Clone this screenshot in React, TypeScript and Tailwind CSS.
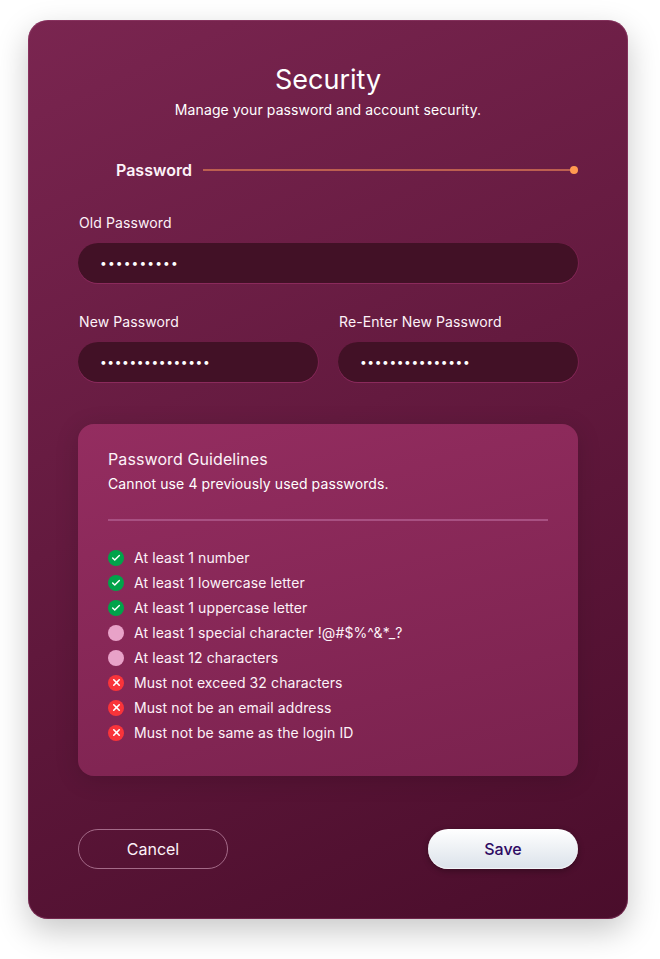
import { Check, X } from "lucide-react";

type RuleState = "pass" | "idle" | "fail";

const rules: { label: string; state: RuleState }[] = [
  { label: "At least 1 number", state: "pass" },
  { label: "At least 1 lowercase letter", state: "pass" },
  { label: "At least 1 uppercase letter", state: "pass" },
  { label: "At least 1 special character !@#$%^&*_?", state: "idle" },
  { label: "At least 12 characters", state: "idle" },
  { label: "Must not exceed 32 characters", state: "fail" },
  { label: "Must not be an email address", state: "fail" },
  { label: "Must not be same as the login ID", state: "fail" },
];

function RuleIcon({ state }: { state: RuleState }) {
  if (state === "pass") {
    return (
      <span className="flex h-4 w-4 shrink-0 items-center justify-center rounded-full bg-[#00a34a] text-white">
        <Check size={10} strokeWidth={3.5} />
      </span>
    );
  }
  if (state === "fail") {
    return (
      <span className="flex h-4 w-4 shrink-0 items-center justify-center rounded-full bg-[#f9343a] text-white">
        <X size={11} strokeWidth={3.5} />
      </span>
    );
  }
  return <span className="h-4 w-4 shrink-0 rounded-full bg-[#e8a2c8]" />;
}

function PasswordField({
  label,
  dots,
  dotsClassName,
}: {
  label: string;
  dots: number;
  dotsClassName: string;
}) {
  return (
    <div className="flex min-w-0 flex-1 flex-col">
      <label className="pl-px text-sm leading-5 tracking-[0.1px] text-[#fdf2f8]">{label}</label>
      <div
        className={`mt-[10px] flex h-10 items-center rounded-full bg-[#421126] pl-[22px] text-xs leading-none text-white shadow-[0_1px_0_#8b2a5c,1px_0_0_rgba(139,42,92,0.5)] ${dotsClassName}`}
      >
        {"•".repeat(dots)}
      </div>
    </div>
  );
}

export default function App() {
  return (
    <div className="min-h-[959px] bg-white pt-5 pl-7 font-['Inter',sans-serif]">
      <div className="flex h-[899px] w-[600px] flex-col rounded-[20px] bg-[linear-gradient(155deg,#7a2550_0%,#4a0d2b_100%)] px-[50px] pt-[43px] pb-[50px] text-white shadow-[0_12px_32px_rgba(0,0,0,0.22)] ring-1 ring-[#a04a78]/40 ring-inset">
        <h1 className="text-center text-[27px] leading-[34px] font-normal">Security</h1>
        <p className="mt-[3px] text-center text-sm leading-5 tracking-[0.1px]">
          Manage your password and account security.
        </p>

        <div className="mt-[40px] flex h-5 items-center pl-[38px]">
          <span className="text-base leading-5 font-semibold text-[#fdf2f8]">Password</span>
          <span className="ml-[11px] h-0.5 flex-1 bg-[#bc5f50]" />
          <span className="-ml-px h-2 w-2 rounded-full bg-[#ff9a50]" />
        </div>

        <div className="mt-[33px] flex">
          <PasswordField label="Old Password" dots={10} dotsClassName="tracking-[1.13px]" />
        </div>
        <div className="mt-[29px] flex gap-5">
          <PasswordField label="New Password" dots={15} dotsClassName="tracking-[0.6px]" />
          <PasswordField label="Re-Enter New Password" dots={15} dotsClassName="tracking-[0.6px]" />
        </div>

        <section className="mt-[42px] flex h-[352px] flex-col rounded-2xl bg-[linear-gradient(165deg,#942d60_0%,#7a224e_100%)] px-[30px] pt-[25px] shadow-[0_4px_24px_rgba(0,0,0,0.14)]">
          <h2 className="text-base leading-5 font-normal tracking-[0.1px] text-[#fdf2f8]">Password Guidelines</h2>
          <p className="mt-[5px] text-sm leading-5 tracking-[0.1px]">Cannot use 4 previously used passwords.</p>
          <div className="mt-[25px] h-0.5 bg-[#a85082]" />
          <ul className="mt-[24px] flex flex-col">
            {rules.map((rule) => (
              <li key={rule.label} className="flex h-[25px] items-center gap-[10px] text-sm tracking-[0.1px] text-[#fdf2f8]">
                <RuleIcon state={rule.state} />
                <span>{rule.label}</span>
              </li>
            ))}
          </ul>
        </section>

        <div className="mt-[53px] flex justify-between">
          <button className="h-10 w-[150px] rounded-full border border-[#a46a88] text-base text-[#fdf2f8]">
            Cancel
          </button>
          <button className="h-10 w-[150px] rounded-full bg-[linear-gradient(180deg,#ffffff_0%,#dbe2ea_100%)] text-base font-medium text-[#2e0a63] shadow-[0_2px_6px_rgba(0,0,0,0.3),inset_0_-1px_1px_rgba(255,255,255,0.7)]">
            Save
          </button>
        </div>
      </div>
    </div>
  );
}
